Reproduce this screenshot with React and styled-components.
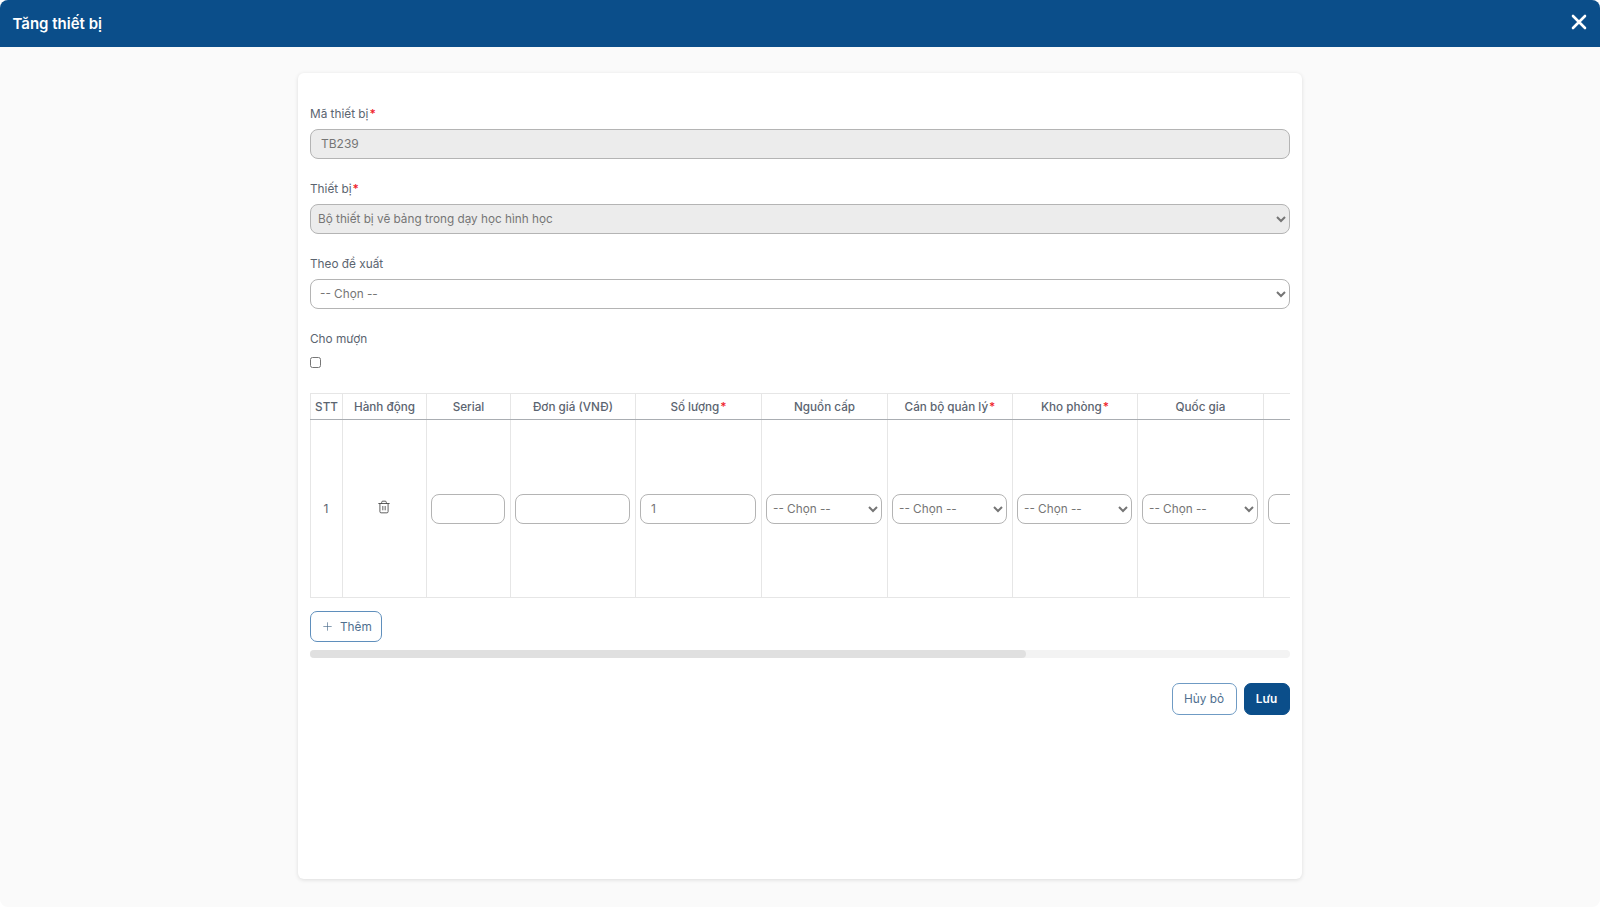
import React from 'react'
import styled, { createGlobalStyle } from 'styled-components'
import { Plus, Trash2 } from 'lucide-react'

const GlobalStyle = createGlobalStyle`
  * { box-sizing: border-box; }
  html, body { margin: 0; padding: 0; background: #fff; }
  body { font-family: Inter, "Noto Sans", sans-serif; font-size: 12px; color: #5b6470; }
`

const Page = styled.div`
  height: 907px;
  display: flex;
  flex-direction: column;
  background: #fafafa;
  border-radius: 8px;
  overflow: hidden;
`

const Header = styled.header`
  height: 47px;
  flex: none;
  display: flex;
  align-items: center;
  justify-content: space-between;
  padding: 0 13px 0 12.5px;
  background: #0b4e8a;
  color: #fff;
`

const Title = styled.h1`
  margin: 0;
  font-size: 15px;
  font-weight: 600;
`

const CloseButton = styled.button`
  display: flex;
  padding: 0;
  margin-top: -4px;
  border: none;
  background: none;
  color: #fff;
`

const Body = styled.main`
  flex: 1;
  display: flex;
  justify-content: center;
  padding-top: 26px;
`

const Card = styled.section`
  width: 1004px;
  height: 806px;
  padding: 32px 12.5px 0 12px;
  background: #fff;
  border-radius: 6px;
  box-shadow: 0 1px 4px rgba(0, 0, 0, 0.12);
`

const Field = styled.div`
  margin-bottom: 21px;
`

const Label = styled.label`
  display: block;
  height: 18px;
  margin-bottom: 6px;
  line-height: 18px;
  font-size: 11.8px;
  color: #5b6470;
`

const Req = styled.span`
  margin-left: 1px;
  color: #f01e2c;
  font-weight: 600;
`

const Input = styled.input`
  display: block;
  width: 100%;
  height: 30px;
  padding: 0 10px 1px;
  border: 1px solid #b4b4b4;
  border-radius: 8px;
  outline: none;
  background: ${({ disabled }) => (disabled ? '#ececec' : '#fff')};
  font: 12px Inter, sans-serif;
  color: #757575;
`

const Select = styled.select`
  display: block;
  width: 100%;
  height: 30px;
  padding: 0 ${({ $pad }) => $pad}px;
  border: 1px solid #b4b4b4;
  border-radius: 8px;
  outline: none;
  background-color: ${({ disabled }) => (disabled ? '#ececec' : '#fff')};
  font: 11.75px Inter, sans-serif;
  color: #757575;
  opacity: 1;
`

const Check = styled.input`
  display: block;
  width: 11px;
  height: 11px;
  margin: 9px 0 0;
`

const Scroller = styled.div`
  margin-top: 25px;
  overflow: hidden;
`

const Table = styled.table`
  width: 1338px;
  table-layout: fixed;
  border-collapse: collapse;
`

const Th = styled.th`
  width: ${({ $w }) => $w}px;
  height: 26px;
  padding: 0;
  border: 1px solid #e6e6e6;
  border-bottom: 1px solid #a9adb2;
  font-size: 11.7px;
  font-weight: 500;
  color: #5b6470;
  text-align: center;
`

const Td = styled.td`
  height: 178px;
  padding: 0 5px 0 4px;
  border: 1px solid #e6e6e6;
  text-align: center;
  color: #5b6470;
`

const TrashButton = styled.button`
  padding: 0;
  border: none;
  background: none;
  color: #4a4a4a;
`

const AddButton = styled.button`
  display: flex;
  align-items: center;
  gap: 6px;
  width: 72px;
  height: 31px;
  margin-top: 13px;
  padding: 0 0 0 10px;
  border: 1px solid #5f8fbc;
  border-radius: 7px;
  background: #fff;
  font: 11.8px Inter, sans-serif;
  color: #4f6f8f;
`

const ScrollTrack = styled.div`
  height: 8px;
  margin-top: 8px;
  background: #f3f3f3;
  border-radius: 4px;
`

const ScrollThumb = styled.div`
  width: ${({ $w }) => $w}%;
  height: 100%;
  background: #e0e0e0;
  border-radius: 4px;
`

const Footer = styled.div`
  display: flex;
  justify-content: flex-end;
  gap: 7px;
  margin-top: 25px;
`

const Button = styled.button`
  height: 32px;
  width: ${({ $primary }) => ($primary ? '46px' : '65px')};
  padding: 0;
  border: 1px solid ${({ $primary }) => ($primary ? '#0b4e8a' : '#6f9bc4')};
  border-radius: 7px;
  background: ${({ $primary }) => ($primary ? '#0b4e8a' : '#fff')};
  font: ${({ $primary }) => ($primary ? 600 : 400)} 11.8px Inter, sans-serif;
  color: ${({ $primary }) => ($primary ? '#fff' : '#4f6f8f')};
`

const columns = [
  { name: 'STT', w: 32 },
  { name: 'Hành động', w: 84 },
  { name: 'Serial', w: 84 },
  { name: 'Đơn giá (VNĐ)', w: 125 },
  { name: 'Số lượng', w: 126, req: true },
  { name: 'Nguồn cấp', w: 126 },
  { name: 'Cán bộ quản lý', w: 125, req: true },
  { name: 'Kho phòng', w: 125, req: true },
  { name: 'Quốc gia', w: 126 },
  { name: '', w: 129 },
  { name: '', w: 128 },
  { name: '', w: 128 },
]

const ChonSelect = ({ pad }) => (
  <Select $pad={pad} defaultValue="">
    <option value="">-- Chọn --</option>
  </Select>
)

export default function App() {
  return (
    <>
      <GlobalStyle />
      <Page>
        <Header>
          <Title>Tăng thiết bị</Title>
          <CloseButton aria-label="Đóng">
            <svg width="16" height="16" viewBox="0 0 16 16" fill="none" stroke="currentColor" strokeWidth="2.6" strokeLinecap="round">
              <path d="M2 2l12 12M14 2L2 14" />
            </svg>
          </CloseButton>
        </Header>
        <Body>
          <Card>
            <Field>
              <Label>Mã thiết bị<Req>*</Req></Label>
              <Input disabled defaultValue="TB239" />
            </Field>
            <Field>
              <Label>Thiết bị<Req>*</Req></Label>
              <Select $pad={3} disabled defaultValue="a">
                <option value="a">Bộ thiết bị vẽ bảng trong dạy học hình học</option>
              </Select>
            </Field>
            <Field>
              <Label>Theo đề xuất</Label>
              <ChonSelect pad={5} />
            </Field>
            <Field>
              <Label>Cho mượn</Label>
              <Check type="checkbox" />
            </Field>
            <Scroller>
              <Table>
                <thead>
                  <tr>
                    {columns.map((c, i) => (
                      <Th key={i} $w={c.w}>
                        {c.name}
                        {c.req && <Req>*</Req>}
                      </Th>
                    ))}
                  </tr>
                </thead>
                <tbody>
                  <tr>
                    <Td>1</Td>
                    <Td>
                      <TrashButton aria-label="Xóa">
                        <Trash2 size={14} strokeWidth={1.5} />
                      </TrashButton>
                    </Td>
                    <Td><Input /></Td>
                    <Td><Input /></Td>
                    <Td><Input defaultValue="1" /></Td>
                    <Td><ChonSelect pad={2} /></Td>
                    <Td><ChonSelect pad={2} /></Td>
                    <Td><ChonSelect pad={2} /></Td>
                    <Td><ChonSelect pad={2} /></Td>
                    <Td><Input /></Td>
                    <Td><Input /></Td>
                    <Td><Input /></Td>
                  </tr>
                </tbody>
              </Table>
              <AddButton>
                <Plus size={13} strokeWidth={1.25} />
                Thêm
              </AddButton>
            </Scroller>
            <ScrollTrack>
              <ScrollThumb $w={73.1} />
            </ScrollTrack>
            <Footer>
              <Button>Hủy bỏ</Button>
              <Button $primary>Lưu</Button>
            </Footer>
          </Card>
        </Body>
      </Page>
    </>
  )
}
